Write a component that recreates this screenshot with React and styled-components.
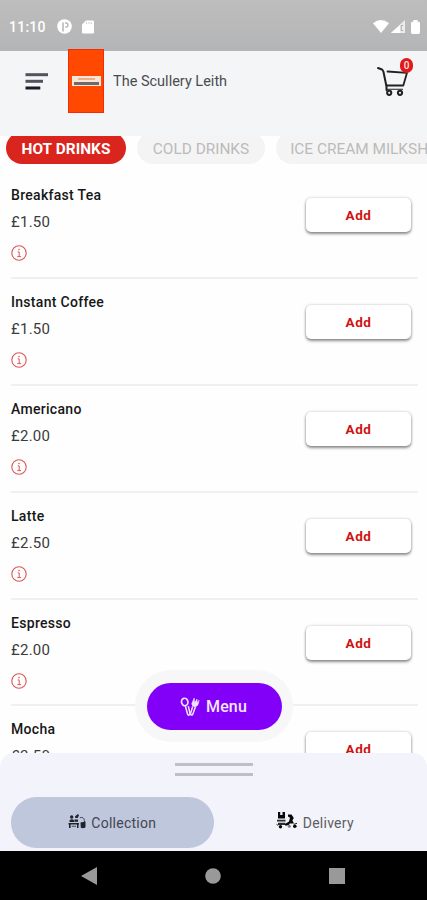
import React, {useState} from 'react';
import styled, {createGlobalStyle} from 'styled-components';

const GlobalStyle = createGlobalStyle`
	* {
		box-sizing: border-box;
	}

	body {
		margin: 0;
		background-color: #fff;
		font-family: Roboto, "Liberation Sans", sans-serif;
	}

	button {
		font-family: inherit;
		border: none;
		padding: 0;
		cursor: pointer;
	}
`;

const Screen = styled.div`
	position: relative;
	width: 100%;
	max-width: 427px;
	height: 900px;
	display: flex;
	flex-direction: column;
	overflow: hidden;
	background-color: #fefefe;
`;

const StatusBar = styled.div`
	height: 51px;
	flex-shrink: 0;
	padding: 2px 7px 0 9px;
	display: flex;
	align-items: center;
	justify-content: space-between;
	background: linear-gradient(#bdbdbd 0%, #b9b9b9 50%, #b3b5b7 100%);
	color: #fff;
`;

const StatusGroup = styled.div`
	display: flex;
	align-items: center;
	gap: ${({$gap})=>$gap}px;
`;

const Clock = styled.span`
	width: 37px;
	margin-right: 1px;
	font-size: 14px;
	font-weight: 500;
	letter-spacing: 0.25px;
	white-space: nowrap;
`;

const Header = styled.header`
	height: 85px;
	flex-shrink: 0;
	padding: 0 17px 0 24px;
	display: flex;
	align-items: flex-start;
	background-color: #f3f5f7;
`;

const HeaderIcon = styled.button`
	display: flex;
	margin-top: 21px;
	background-color: transparent;
`;

const Logo = styled.div`
	width: 36px;
	height: 64px;
	margin: -2px 0 0 20px;
	display: flex;
	align-items: center;
	justify-content: center;
	background-color: #ff4800;
	border: 1px solid #f52a08;
`;

const LogoPlate = styled.div`
	width: 29px;
	height: 10px;
	padding: 2px 2px 1px;
	display: flex;
	flex-direction: column;
	align-items: center;
	justify-content: space-between;
	background-color: #f5e6dc;
`;

const PlateLine = styled.div`
	width: ${({$width})=>$width}px;
	height: ${({$height})=>$height}px;
	background-color: ${({$color})=>$color};
`;

const Title = styled.h1`
	flex: 1;
	margin: 21px 0 0 9px;
	font-size: 14.5px;
	font-weight: 400;
	line-height: 20px;
	letter-spacing: 0;
	color: #4b4c4e;
`;

const CartButton = styled.button`
	position: relative;
	display: flex;
	margin-top: 15px;
	background-color: transparent;
`;

const Badge = styled.span`
	position: absolute;
	top: -8px;
	right: -3px;
	width: 13px;
	height: 15px;
	border-radius: 7px;
	background-color: #df1a1a;
	color: #ffe3e3;
	font-size: 10px;
	font-weight: 500;
	line-height: 15px;
	text-align: center;
`;

const Tabs = styled.nav`
	height: 36px;
	flex-shrink: 0;
	padding-left: 6px;
	display: flex;
	align-items: flex-start;
	gap: 11px;
	overflow: hidden;
`;

const Tab = styled.button`
	width: ${({$width})=>$width}px;
	height: 32px;
	margin-top: -4px;
	padding-top: 1px;
	flex-shrink: 0;
	border-radius: 16px;
	background-color: ${({$active})=>$active ? '#da251e' : '#f4f4f4'};
	color: ${({$active})=>$active ? '#fff' : '#bbb'};
	font-size: 15.4px;
	font-weight: ${({$active})=>$active ? 700 : 400};
	letter-spacing: ${({$active})=>$active ? 0.05 : 0}px;
	white-space: nowrap;
`;

const List = styled.main`
	flex: 1;
	min-height: 0;
	padding: 0 9px 0 11px;
	overflow: hidden;
`;

const Row = styled.div`
	height: 106.9px;
	padding: 14px 7px 0 0;
	display: flex;
	align-items: flex-start;
	justify-content: space-between;
	border-bottom: 2px solid #f0f0f0;
`;

const Info = styled.div`
	display: flex;
	flex-direction: column;
	align-items: flex-start;
`;

const Name = styled.span`
	font-size: 14px;
	font-weight: 500;
	line-height: 18px;
	letter-spacing: 0.3px;
	color: #171717;
`;

const Price = styled.span`
	margin-top: 8px;
	font-size: 15px;
	line-height: 20px;
	letter-spacing: 0.25px;
	color: #3b3b3b;
`;

const InfoButton = styled.button`
	display: flex;
	margin-top: 13px;
	background-color: transparent;
`;

const AddButton = styled.button`
	width: 105px;
	height: 34px;
	margin-top: 12px;
	border-radius: 5px;
	background-color: #fff;
	box-shadow: 0 2px 3px rgba(0, 0, 0, 0.42), 0 0 3px rgba(0, 0, 0, 0.22);
	color: #cf1313;
	font-size: 13.5px;
	font-weight: 700;
	letter-spacing: 0.5px;
`;

const MenuHalo = styled.div`
	position: absolute;
	left: 135px;
	top: 670px;
	padding: 13px 11px 12px 12px;
	border-radius: 36px;
	background-color: #f7f7f7;
`;

const MenuButton = styled.button`
	width: 135px;
	height: 47px;
	padding-right: 2px;
	display: flex;
	align-items: center;
	justify-content: center;
	gap: 6px;
	border-radius: 24px;
	background-color: #8200f8;
	color: #f3e8ff;
	font-size: 16px;
	font-weight: 500;
	letter-spacing: 0.1px;
`;

const Sheet = styled.section`
	height: 98px;
	flex-shrink: 0;
	padding: 10px 11px 3px;
	display: flex;
	flex-direction: column;
	justify-content: space-between;
	border-radius: 14px 14px 0 0;
	background-color: #f2f3fb;
`;

const Handle = styled.div`
	width: 78px;
	height: 13px;
	align-self: center;
	margin-left: 1px;
	border: solid #bfc0c3;
	border-width: 3px 0;
`;

const Modes = styled.div`
	display: grid;
	grid-template-columns: 1fr 1fr;
`;

const Mode = styled.button`
	height: 51px;
	display: flex;
	align-items: center;
	justify-content: center;
	gap: 5px;
	border-radius: 26px;
	background-color: ${({$active})=>$active ? '#bfc7dd' : 'transparent'};
	color: ${({$active})=>$active ? '#42454e' : '#5d5e62'};
	font-size: 14px;
	letter-spacing: 0.25px;
`;

const NavBar = styled.footer`
	height: 49px;
	flex-shrink: 0;
	padding: 0 82px 0 81px;
	display: flex;
	align-items: center;
	justify-content: space-between;
	background-color: #000;
`;

const drinks = [
	{name: 'Breakfast Tea', price: '£1.50'},
	{name: 'Instant Coffee', price: '£1.50'},
	{name: 'Americano', price: '£2.00'},
	{name: 'Latte', price: '£2.50'},
	{name: 'Espresso', price: '£2.00'},
	{name: 'Mocha', price: '£2.50'},
];

const categories = [
	{label: 'HOT DRINKS', width: 120},
	{label: 'COLD DRINKS', width: 128},
	{label: 'ICE CREAM MILKSHAKES', width: 204},
];


function PIcon()
{
	return <svg width="15" height="15" viewBox="0 0 15 15">
		<circle cx="7.5" cy="7.5" r="7.3" fill="#fff" />
		<path d="M6 12.5V3.5" fill="none" stroke="#b8b8b8" strokeWidth="1.6" />
		<path d="M8 4H9A2 2 0 0 1 9 8H8.3" fill="none" stroke="#b8b8b8" strokeWidth="1.4" />
	</svg>;
}


function CardIcon()
{
	return <svg width="12" height="14" viewBox="0 0 12 14">
		<path d="M4 0.5H10.8Q12 .5 12 1.7V12.3Q12 13.5 10.8 13.5H1.2Q0 13.5 0 12.3V4.5Z" fill="#fff" />
		<path d="M4.6 2V4M7 2V4M9.3 2V4" stroke="#c9c9c9" strokeWidth="0.9" />
	</svg>;
}


function WifiIcon()
{
	return <svg width="16" height="13" viewBox="0 0 16 13">
		<path d="M0 3.2Q8-3 16 3.2L8 13Z" fill="#fff" />
	</svg>;
}


function SignalIcon()
{
	return <svg width="14" height="13" viewBox="0 0 14 13">
		<path d="M14 0V13H0Z" fill="#ececec" />
		<path d="M9 5V13H0Z" fill="#fff" />
		<path d="M12.2 5.5H10.2V10.5H12.2" fill="none" stroke="#aaa" strokeWidth="1" />
	</svg>;
}


function BatteryIcon()
{
	return <svg width="9" height="14" viewBox="0 0 9 14">
		<path d="M2.5 0H6.5V1.2L9 2.5V12.6Q9 14 7.6 14H1.4Q0 14 0 12.6V2.5L2.5 1.2Z" fill="#fff" />
	</svg>;
}


function BurgerIcon()
{
	return <svg width="24" height="19" viewBox="0 0 24 19" fill="none" strokeWidth="3">
		<path d="M1.5 2.7H24" stroke="#53525d" />
		<path d="M1.5 9.3H19" stroke="#53525d" />
		<path d="M1.5 16H16.3" stroke="#1b1a26" />
	</svg>;
}


function CartIcon()
{
	return <svg width="34" height="31" viewBox="0 0 34 31" fill="none" stroke="#202122" strokeLinecap="round" strokeLinejoin="round">
		<path d="M2 2L6 3.5Q7.2 4.5 7.5 6L10.5 20.5V24" strokeWidth="2" />
		<path d="M11.5 5.5L31 6.8L27.3 19.5H10.5" strokeWidth="1.8" />
		<path d="M10.5 23.3H26.5" strokeWidth="1.1" />
		<circle cx="13.2" cy="26.8" r="2.1" strokeWidth="2" />
		<circle cx="24" cy="26.8" r="2.1" strokeWidth="2" />
	</svg>;
}


function InfoIcon()
{
	return <svg width="16" height="16" viewBox="0 0 16 16" fill="none" stroke="#dd5555">
		<circle cx="8" cy="8" r="7.2" strokeWidth="1.1" />
		<path d="M6.7 6.9H8.2V11.5M6.3 11.6H10" strokeWidth="1" />
		<circle cx="8" cy="4.6" r="0.5" strokeWidth="0.8" />
	</svg>;
}


function CutleryIcon()
{
	return <svg width="20" height="20" viewBox="0 0 20 20" fill="none" stroke="#f0e2ff">
		<ellipse cx="4.7" cy="5" rx="3.2" ry="3.8" transform="rotate(-15 4.7 5)" strokeWidth="1.7" />
		<path d="M5.3 9L7.6 17.2Q9.3 19.4 10 16.5L8.3 9.2" strokeWidth="1.5" />
		<path d="M12.7 9.5L10.5 16.5Q11.2 19.3 12.8 17.2L15.4 10" strokeWidth="1.5" />
		<path d="M14.2 1L11.8 6.6Q12 10 15.2 9.8Q18.5 9.2 19 3.2L17 5.8V2L14.5 6Z" fill="#f0e2ff" strokeWidth="0.6" />
	</svg>;
}


function CollectionIcon()
{
	return <svg width="18" height="20" viewBox="0 0 18 20" fill="#20232b">
		<circle cx="3.7" cy="4" r="1.7" />
		<path d="M1.5 7.5Q3.8 5.2 6.2 7.5V9H1.5Z" />
		<path d="M7 3.5L9.8 1L11 2.2L9.7 5H7.4Z" />
		<path d="M6.5 6.5H10V8.8H6.5Z" />
		<path d="M0.5 10H11V11.5H0.5ZM1 11.5H2.6V15H1ZM9 11.5H10.5V15H9Z" />
		<path d="M3.7 12.7H8V14H3.7Z" opacity="0.6" />
		<path d="M11.8 4.7Q16 3.5 16.4 7.5V9.5" fill="none" stroke="#444956" />
		<path d="M12.5 9.5L17.5 8.5V14.2Q15.5 16 12.8 14.8Z" />
	</svg>;
}


function DeliveryIcon()
{
	return <svg width="22" height="22" viewBox="0 0 22 22" fill="#08090a">
		<path d="M2 0H4.2V2.9H6.5V0H9V6.5H2Z" />
		<path d="M1 7.8H9.5V9.6H1ZM2 10.8H9.4V13H2Z" opacity="0.85" />
		<path d="M12 2.5H15.5L17.8 6L16.4 8.5L18 11.5H13.7Q13.3 13.5 9 13.5V12L13 9.5L14 5.7L12 4.5Z" />
		<circle cx="4.5" cy="14.7" r="1.7" />
		<circle cx="13.3" cy="14.2" r="1.5" opacity="0.5" />
		<circle cx="18.8" cy="14.3" r="1.8" />
		<path d="M0.5 12.3L2.2 13.5M17.8 12.3L21 11.3" stroke="#222" strokeWidth="1" />
	</svg>;
}


function Drink({name, price, onAdd})
{
	return <Row>
		<Info>
			<Name>{name}</Name>
			<Price>{price}</Price>
			<InfoButton aria-label={`About ${name}`}><InfoIcon /></InfoButton>
		</Info>
		<AddButton onClick={onAdd}>Add</AddButton>
	</Row>;
}


function App()
{
	const [count, setCount] = useState(0);
	const [category, setCategory] = useState('HOT DRINKS');
	const [mode, setMode] = useState('collection');

	const handleAdd = function()
	{
		setCount(count=>count + 1);
	}


	return <Screen>
		<GlobalStyle />
		<StatusBar>
			<StatusGroup $gap={10}>
				<Clock>11:10</Clock>
				<PIcon />
				<CardIcon />
			</StatusGroup>
			<StatusGroup $gap={6}>
				<StatusGroup $gap={2}>
					<WifiIcon />
					<SignalIcon />
				</StatusGroup>
				<BatteryIcon />
			</StatusGroup>
		</StatusBar>
		<Header>
			<HeaderIcon aria-label="Navigation"><BurgerIcon /></HeaderIcon>
			<Logo>
				<LogoPlate>
					<PlateLine $width={17} $height={2} $color="#f3ad84" />
					<PlateLine $width={25} $height={3} $color="#716963" />
				</LogoPlate>
			</Logo>
			<Title>The Scullery Leith</Title>
			<CartButton aria-label="Cart">
				<CartIcon />
				<Badge>{count}</Badge>
			</CartButton>
		</Header>
		<Tabs>
			{categories.map( ({label, width})=>
				<Tab key={label} $width={width} $active={category === label} onClick={()=>setCategory(label)}>
					{label}
				</Tab>
			)}
		</Tabs>
		<List>
			{drinks.map( ({name, price})=>
				<Drink name={name} price={price} onAdd={handleAdd} key={name} />
			)}
		</List>
		<MenuHalo>
			<MenuButton><CutleryIcon />Menu</MenuButton>
		</MenuHalo>
		<Sheet>
			<Handle />
			<Modes>
				<Mode $active={mode === 'collection'} onClick={()=>setMode('collection')}>
					<CollectionIcon />Collection
				</Mode>
				<Mode $active={mode === 'delivery'} onClick={()=>setMode('delivery')}>
					<DeliveryIcon />Delivery
				</Mode>
			</Modes>
		</Sheet>
		<NavBar>
			<svg width="16" height="18" viewBox="0 0 16 18"><path d="M16 0V18L0 9Z" fill="#999" /></svg>
			<svg width="16" height="16" viewBox="0 0 16 16"><circle cx="8" cy="8" r="7.8" fill="#999" /></svg>
			<svg width="16" height="16" viewBox="0 0 16 16"><path d="M0 0H16V16H0Z" fill="#999" /></svg>
		</NavBar>
	</Screen>
}


export default App;
